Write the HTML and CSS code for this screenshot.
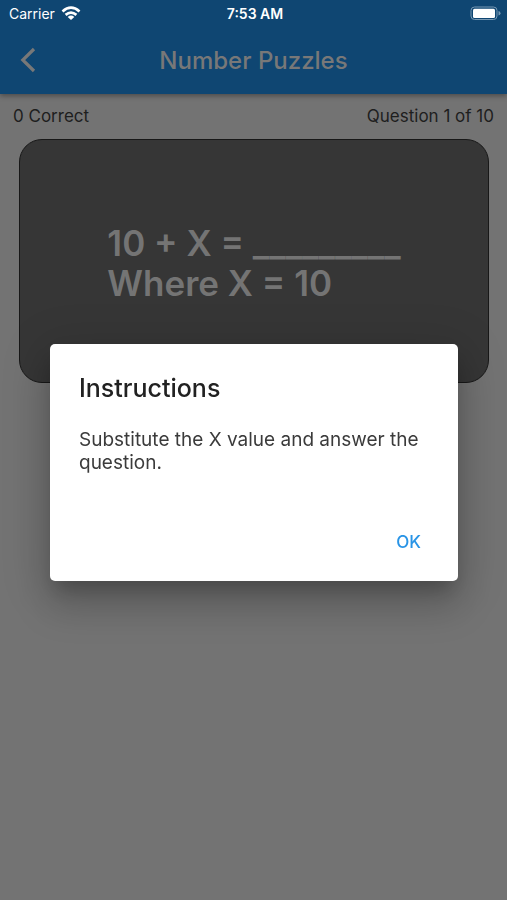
FILE: index.html
```
<!DOCTYPE html>
<html lang="en">
<head>
<meta charset="utf-8">
<meta name="viewport" content="width=device-width, initial-scale=1">
<title>Number Puzzles</title>
<link rel="stylesheet" href="styles.css">
</head>
<body>
<div class="screen">
  <header class="header">
    <div class="status">
      <div class="carrier">
        <span>Carrier</span>
        <svg width="20" height="15" viewBox="0 0 20 15" fill="none" stroke="#fff" stroke-width="2.700" aria-hidden="true">
          <path d="M1.500 5.400Q10-2.200 18.500 5.400"/>
          <path d="M4.600 8.900Q10 4.300 15.400 8.900"/>
          <path d="M10 14 6.700 10.900Q10 8.300 13.300 10.900Z" fill="#fff" stroke="none"/>
        </svg>
      </div>
      <span class="time">7:53 AM</span>
      <svg class="battery" width="31" height="15" viewBox="0 0 31 15" aria-hidden="true">
        <rect x="1" y="1" width="26" height="12.500" rx="3.500" fill="none" stroke="#7899b4"/>
        <rect x="3" y="2.700" width="22" height="9.200" rx="1.500" fill="#fff"/>
        <path d="M28.500 5Q30.500 5.500 30.500 7.200T28.500 9.500Z" fill="#7899b4"/>
      </svg>
    </div>
    <div class="toolbar">
      <button class="back" type="button" aria-label="Back">
        <svg width="16" height="26" viewBox="0 0 16 26" fill="none" stroke="currentColor" stroke-width="3.200" aria-hidden="true">
          <path d="M14 2 2.800 13 14 24"/>
        </svg>
      </button>
      <h1 class="title">Number Puzzles</h1>
    </div>
  </header>
  <main class="quiz">
    <div class="progress">
      <span>0 Correct</span>
      <span>Question 1 of 10</span>
    </div>
    <section class="card">
      <p class="puzzle">10 + X = _________<br>Where X = 10</p>
    </section>
  </main>
</div>
<div class="overlay">
  <div class="dialog" role="dialog" aria-modal="true" aria-labelledby="dialog-title">
    <h2 class="dialog-title" id="dialog-title">Instructions</h2>
    <p class="dialog-text">Substitute the X value and answer the question.</p>
    <div class="actions"><button class="ok" type="button">OK</button></div>
  </div>
</div>
</body>
</html>
```
FILE: styles.css
```
* {
  box-sizing: border-box;
}

body {
  margin: 0;
  background: #737373;
  font-family: Inter, "Liberation Sans", sans-serif;
}

h1, h2, p {
  margin: 0;
}

button {
  border: 0;
  background: none;
  font-family: inherit;
  cursor: pointer;
}

.screen {
  min-height: 100vh;
}

.header {
  background: #0f4672;
  box-shadow: 0 2px 5px rgba(0, 0, 0, 0.35);
}

.status {
  display: grid;
  grid-template-columns: 1fr auto 1fr;
  align-items: center;
  height: 26px;
  padding: 0 6px 0 9px;
  color: #fff;
  font-size: 14px;
}

.carrier {
  display: flex;
  align-items: center;
  gap: 6px;
}

.time {
  font-weight: 600;
}

.battery {
  justify-self: end;
}

.toolbar {
  display: grid;
  grid-template-columns: 56px 1fr 56px;
  align-items: center;
  height: 68px;
  color: #787878;
}

.back {
  display: flex;
  justify-content: center;
  padding: 8px;
  color: inherit;
}

.title {
  text-align: center;
  font-size: 24px;
  font-weight: 500;
}

.progress {
  display: flex;
  justify-content: space-between;
  padding: 12px 13px;
  color: #1e1e1e;
  font-size: 17px;
  line-height: 21px;
}

.card {
  display: flex;
  align-items: center;
  justify-content: center;
  min-height: 244px;
  margin: 0 18px 0 19px;
  padding-top: 4px;
  border: 1px solid #181818;
  border-radius: 23px;
  background: #363636;
}

.puzzle {
  color: #747474;
  font-size: 35px;
  font-weight: 600;
  line-height: 40px;
}

.overlay {
  position: fixed;
  inset: 0;
  display: flex;
  align-items: center;
  justify-content: center;
  padding: 25px 49px 0 50px;
}

.dialog {
  width: 100%;
  padding: 29px 29px 21px;
  border-radius: 5px;
  background: #fff;
  box-shadow: 0 14px 18px -6px rgba(0, 0, 0, 0.2), 0 24px 38px 4px rgba(0, 0, 0, 0.14), 0 8px 46px 8px rgba(0, 0, 0, 0.12);
}

.dialog-title {
  margin-bottom: 25px;
  color: #212121;
  font-size: 25px;
  font-weight: 500;
  line-height: 30px;
}

.dialog-text {
  color: #3b3b3b;
  font-size: 19px;
  line-height: 23px;
}

.actions {
  display: flex;
  justify-content: flex-end;
  padding-top: 50px;
}

.ok {
  padding: 8px;
  color: #2994e6;
  font-size: 17px;
  font-weight: 500;
  line-height: 20px;
}
```
